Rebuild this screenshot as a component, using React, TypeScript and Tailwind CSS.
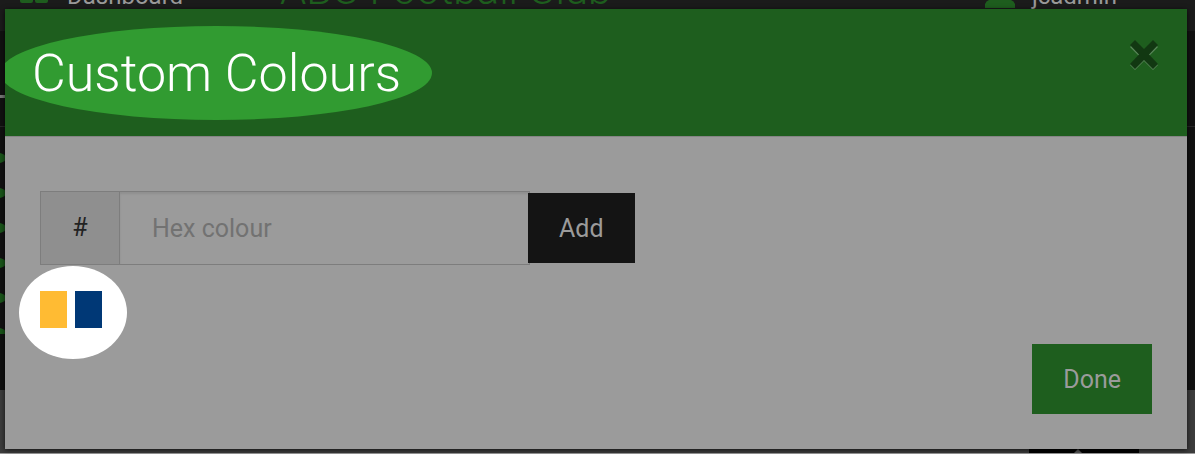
import { useState } from "react";

const savedColours = [
  { name: "Amber", className: "bg-[#ffbb33]" },
  { name: "Navy", className: "bg-[#003876]" },
];

function PageBehind() {
  return (
    <div className="absolute inset-0 flex flex-col overflow-hidden bg-[#111111]">
      <header className="flex h-[31px] shrink-0 items-end bg-[#1b1b1b] pr-[78px] pb-[23px] pl-5 text-[24px] leading-6 text-[#999999]">
        <a href="#dashboard" className="flex w-[260px] items-end gap-[19px]">
          <svg className="h-[11px] w-7" viewBox="0 0 28 11">
            <path d="M0 0h13v4q0 2-2 2h-9q-2 0-2-2zM15 0h13v4q0 2-2 2h-9q-2 0-2-2z" fill="#1e5d1e" />
          </svg>
          Dashboard
        </a>
        <span className="grow text-[42px] leading-9 font-light whitespace-nowrap text-[#1e5d1e]">
          ABC Football Club
        </span>
        <a href="#account" className="flex items-end gap-[17px]">
          <svg className="h-6 w-[30px]" viewBox="0 0 30 24">
            <path d="M0 24V20Q1 17 4 16H26Q29 17 30 20V24z" fill="#1e5d1e" />
          </svg>
          jcadmin
        </a>
      </header>
      <div className="mt-16 h-[3px] w-5 shrink-0 bg-[#777777]" />
      <div className="mt-7 h-px shrink-0 bg-[#272727]" />
      <svg className="mt-[23px] h-[184px] w-[7px] shrink-0" viewBox="0 0 7 184" fill="#1a551a">
        <path d="M0 3Q5 4 7 8Q5 12 0 13zM0 38Q5 39 7 43Q5 47 0 48zM0 73Q5 74 7 78Q5 82 0 83zM0 108Q5 109 7 113Q5 117 0 118zM0 143Q5 144 7 148Q5 152 0 153zM0 178Q5 179 7 183V184H0z" />
      </svg>
      <footer className="mt-14 flex grow items-end justify-end border-b border-[#999999] bg-[#3c3c3c] pr-14">
        <svg className="h-1 w-[110px]" viewBox="0 0 110 4">
          <path d="M0 0H110V4H0z" />
          <path d="M45 4L49 0L53 4z" fill="#555555" />
        </svg>
      </footer>
    </div>
  );
}

export default function App() {
  const [hex, setHex] = useState("");

  return (
    <div className="relative min-h-screen overflow-hidden pt-[9px] pr-2 pb-[5px] pl-[5px] font-[Roboto,sans-serif] text-[25px]">
      <PageBehind />
      <section
        role="dialog"
        aria-labelledby="dialog-title"
        className="relative bg-[#9b9b9b] shadow-[0_1px_5px_rgba(0,0,0,0.7)]"
      >
        <header className="flex h-32 items-start justify-between overflow-hidden border-b border-[#858585] bg-[#1e5e1e] pr-7 pl-[27px]">
          <div className="relative pt-8">
            <span className="absolute top-[17px] -right-[31px] -left-8 h-[94px] rounded-[50%] bg-[#319b31]" />
            <h1 id="dialog-title" className="relative text-[52px] leading-[66px] font-light text-white">
              Custom Colours
            </h1>
          </div>
          <button type="button" aria-label="Close" className="mt-[30px]">
            <svg className="h-8 w-[30px]" viewBox="0 0 30 32">
              <path d="M6 4L15 13L24 4L29 8L20 17L29 26L24 31L15 22L6 31L1 26L10 17L1 8z" fill="#5a875a" />
              <path d="M6 1L15 10L24 1L29 6L20 15.5L29 25L24 30L15 21L6 30L1 25L10 15.5L1 6z" fill="#123812" />
            </svg>
          </button>
        </header>

        <div className="px-[35px] pt-[54px] pb-[35px]">
          <form className="flex items-center" onSubmit={(event) => event.preventDefault()}>
            <label
              htmlFor="hex"
              className="flex h-[74px] w-20 items-center justify-center border border-[#7d7d7d] bg-[#8f8f8f] text-[#222222]"
            >
              #
            </label>
            <input
              id="hex"
              type="text"
              placeholder="Hex colour"
              value={hex}
              onChange={(event) => setHex(event.target.value)}
              className="h-[74px] w-[410px] min-w-0 border border-l-0 border-[#7d7d7d] bg-[#9b9b9b] px-8 text-[#222222] shadow-[inset_0_2px_2px_rgba(0,0,0,0.08)] outline-none placeholder:text-[#727272]"
            />
            <button type="submit" className="-ml-0.5 h-[70px] shrink-0 bg-[#141414] px-[31px] pt-0.5 text-[#9b9b9b]">
              Add
            </button>
          </form>

          <div className="relative mt-[26px] flex w-fit gap-2">
            <span className="absolute -top-[25px] -right-[25px] -left-[21px] h-[93px] rounded-[50%] bg-white" />
            {savedColours.map((colour) => (
              <button
                key={colour.name}
                type="button"
                aria-label={colour.name}
                className={`relative h-[37px] w-[27px] ${colour.className}`}
              />
            ))}
          </div>

          <div className="mt-4 flex justify-end">
            <button type="button" className="h-[70px] bg-[#1e5e1e] px-[31px] pt-0.5 text-[#9b9b9b]">
              Done
            </button>
          </div>
        </div>
      </section>
    </div>
  );
}
